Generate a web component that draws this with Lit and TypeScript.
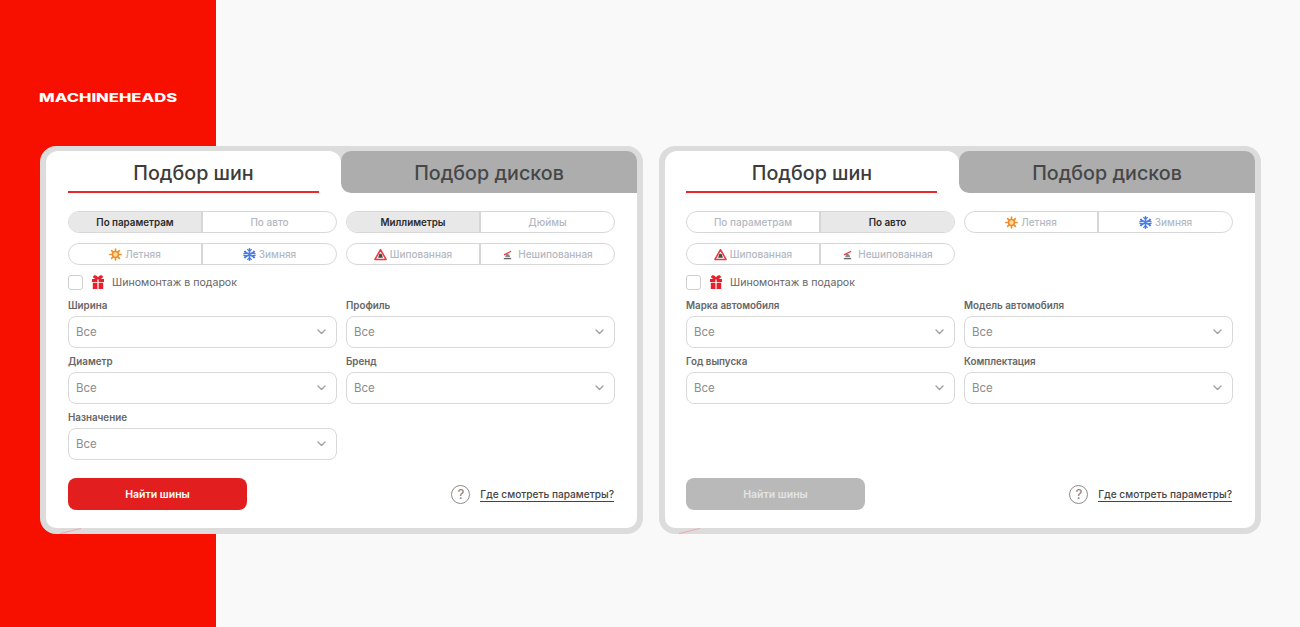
import { LitElement, html, css, svg } from "lit";
import { customElement, property } from "lit/decorators.js";

const sun = html`<svg class="ico" viewBox="0 0 14 14"><g stroke="#f28c28" stroke-width="1.7" stroke-linecap="round"><path d="M7 1v2M7 11v2M1 7h2M11 7h2M2.8 2.8 4.2 4.2M9.8 9.8l1.4 1.4M2.8 11.2 4.2 9.8M9.8 4.2l1.4-1.4"/></g><circle cx="7" cy="7" r="3.2" fill="#fbdca0" stroke="#f08a24" stroke-width="1.6"/></svg>`;
const snow = html`<svg class="ico" viewBox="0 0 14 14"><g stroke="#4a7be6" stroke-linecap="round" fill="none"><path d="M7 1v12M1.8 4l10.4 6M1.8 10l10.4-6" stroke-width="1.8"/><path d="M5 1.6 7 3.4l2-1.8M5 12.4 7 10.6l2 1.8M.9 6l2.6-.1-1-2.5M13.1 6l-2.6-.1 1-2.5M.9 8l2.6.1-1 2.5M13.1 8l-2.6.1 1 2.5" stroke-width="1.2"/></g></svg>`;
const studded = html`<svg class="ico" viewBox="0 0 14 13"><path d="M7 1.4 13 11.8H1Z" fill="#fff" stroke="#ee3b3f" stroke-width="1.7" stroke-linejoin="round"/><path d="M5.8 5.6h2.4l1.4 4.4H4.4Z" fill="#4a4a4a"/></svg>`;
const studless = html`<svg class="ico small" viewBox="0 0 12 12"><path d="M2 10.5h8" stroke="#666" stroke-width="1.4"/><path d="M3.4 9 5 4.6l3 1.6L9 9Z" fill="#8a8a8a"/><path d="M2.2 6.4 10 2.4" stroke="#ee3b3f" stroke-width="1.3"/></svg>`;
const gift = html`<svg class="gift" viewBox="0 0 12 14"><path fill="#e8202a" d="M0 4h5.4v3H0zM6.6 4H12v3H6.6zM.8 7.8h4.6V14H.8zM6.6 7.8h4.6V14H6.6z"/><path d="M6 3.8C4.6 1 2.8.4 2 1.2 1.2 2 2.4 3.8 6 3.8ZM6 3.8C7.4 1 9.2.4 10 1.2 10.8 2 9.6 3.8 6 3.8Z" fill="#e8202a" stroke="#e8202a" stroke-width="1.2"/></svg>`;
const chevron = svg`<path d="M1 1 4.5 4.4 8 1" fill="none" stroke="#a0a0a0" stroke-width="1.4" stroke-linecap="round" stroke-linejoin="round"/>`;

@customElement("tire-card")
class TireCard extends LitElement {
  @property({ type: String }) mode = "params";

  static styles = css`
    :host { display: block; font-family: Inter, "Noto Sans", sans-serif; }
    .card { position: relative; box-sizing: border-box; height: 388px; border: solid #dcdcdc; border-width: 5px 6px 6px 6px; border-radius: 16px; background: #fff; display: flex; flex-direction: column; }
    .tabs { display: grid; grid-template-columns: 295px 1fr; height: 42px; background: linear-gradient(#dcdcdc 50%, #fff 50%); flex: none; }
    .auto .tabs { grid-template-columns: 294px 1fr; }
    .tab { display: flex; align-items: center; justify-content: center; font-size: 19.7px; font-weight: 500; color: #3c3c3c; position: relative; padding-top: 1px; }
    .tab.on { background: #fff; border-radius: 12px 12px 0 0; }
    .tab.on::after { content: ""; position: absolute; left: 22px; right: 22px; bottom: 0; height: 2px; background: #e8282b; }
    .auto .tab.on::after { left: 21px; }
    .tab.off { background: #adadad; color: #474747; border-radius: 10px 10px 0 10px; }
    .body { flex: 1; display: flex; flex-direction: column; padding: 18px 22px; min-height: 0; }
    .auto .body { padding-left: 21px; }
    .grid { display: grid; grid-template-columns: 269px 269px; column-gap: 9px; }
    .toggles { row-gap: 10px; }
    .toggle { display: grid; grid-template-columns: 132px 1fr; height: 22px; box-sizing: border-box; border: 1px solid #d8d8d8; border-radius: 11px; overflow: hidden; }
    .seg { display: flex; align-items: center; justify-content: center; gap: 3px; font-size: 10px; font-weight: 500; color: #b3b8c2; white-space: nowrap; }
    .seg + .seg { border-left: 2px solid #d6d6d6; }
    .seg.on { background: #e8e8e8; color: #2b2b2b; font-weight: 600; font-size: 9.8px; }
    .ico { width: 13px; height: 13px; flex: none; }
    .ico.small { width: 11px; height: 11px; margin-right: 2px; }
    .gift { width: 12px; height: 14px; flex: none; margin-right: 8px; }
    .check { display: flex; align-items: center; height: 16px; margin-top: 9px; font-size: 10.6px; color: #666; }
    .box { width: 15px; height: 15px; box-sizing: border-box; border: 1px solid #cfcfcf; border-radius: 3px; margin-right: 9px; }
    .fields { margin-top: 2px; }
    .field { display: flex; flex-direction: column; }
    .label { height: 24px; box-sizing: border-box; padding-top: 2px; display: flex; align-items: center; font-size: 9.8px; font-weight: 600; color: #666; }
    .select { height: 32px; box-sizing: border-box; border: 1px solid #d9d9d9; border-radius: 8px; display: flex; align-items: center; justify-content: space-between; padding: 0 10px 0 7px; font-size: 11.5px; color: #8c8c8c; }
    .select svg { width: 9px; height: 6px; }
    .foot { margin-top: auto; display: flex; align-items: center; justify-content: space-between; }
    .btn { width: 179px; height: 32px; border-radius: 8px; background: #e31e1e; color: #fff; display: flex; align-items: center; justify-content: center; font-size: 10.5px; font-weight: 600; }
    .btn.dis { background: #b9b9b9; color: #e4e4e4; }
    .help { display: flex; align-items: center; gap: 10px; font-size: 10.15px; color: #444; font-weight: 500; margin-right: 1px; }
    .q { width: 19px; height: 19px; box-sizing: border-box; border: 1.6px solid #8c8c8c; border-radius: 50%; display: flex; align-items: center; justify-content: center; font-size: 13px; color: #8c8c8c; font-weight: 500; }
    .link { border-bottom: 1px solid #444; padding: 2px 0 1px; }
    .mark { position: absolute; left: 14px; bottom: -6px; width: 22px; height: 6px; pointer-events: none; }
  `;

  private toggle(a: unknown, b: unknown, on = -1) {
    return html`<div class="toggle"><div class="seg ${on === 0 ? "on" : ""}">${a}</div><div class="seg ${on === 1 ? "on" : ""}">${b}</div></div>`;
  }
  private field(label: string) {
    return html`<div class="field"><div class="label">${label}</div><div class="select"><span>Все</span><svg viewBox="0 0 9 6">${chevron}</svg></div></div>`;
  }

  render() {
    const params = this.mode === "params";
    const season = this.toggle(html`${sun}<span>Летняя</span>`, html`${snow}<span>Зимняя</span>`);
    const studs = this.toggle(html`${studded}<span>Шипованная</span>`, html`${studless}<span>Нешипованная</span>`);
    const fields = params
      ? ["Ширина", "Профиль", "Диаметр", "Бренд", "Назначение"]
      : ["Марка автомобиля", "Модель автомобиля", "Год выпуска", "Комплектация"];
    return html`<div class="card ${params ? "" : "auto"}">
      <div class="tabs"><div class="tab on">Подбор шин</div><div class="tab off">Подбор дисков</div></div>
      <div class="body">
        <div class="grid toggles">
          ${this.toggle("По параметрам", "По авто", params ? 0 : 1)}
          ${params ? this.toggle("Миллиметры", "Дюймы", 0) : season}
          ${params ? season : studs}
          ${params ? studs : ""}
        </div>
        <div class="check"><div class="box"></div>${gift}<span>Шиномонтаж в подарок</span></div>
        <div class="grid fields">${fields.map((f) => this.field(f))}</div>
        <div class="foot">
          <div class="btn ${params ? "" : "dis"}">Найти шины</div>
          <div class="help"><div class="q">?</div><span class="link">Где смотреть параметры?</span></div>
        </div>
      </div>
      <svg class="mark" viewBox="0 0 22 6"><path d="M0 5.6 21 .4" stroke="#f1a9ab" stroke-width="1"/></svg>
    </div>`;
  }
}

@customElement("app-root")
class AppRoot extends LitElement {
  static styles = css`
    :host { display: block; height: 627px; overflow: hidden; background: linear-gradient(90deg, #f70f00 216px, #f9f9f9 216px); }
    .logo { height: 146px; box-sizing: border-box; padding: 91px 0 0 39px; font-family: Inter, sans-serif; font-weight: 800; font-size: 11.6px; line-height: 14px; color: #fff; }
    .logo span { display: inline-block; transform: scaleX(1.43); transform-origin: left center; }
    .cards { display: grid; grid-template-columns: 603px 602px; column-gap: 16px; padding-left: 40px; }
  `;
  render() {
    return html`<div class="logo"><span>MACHINEHEADS</span></div>
      <div class="cards"><tire-card mode="params"></tire-card><tire-card mode="auto"></tire-card></div>`;
  }
}
